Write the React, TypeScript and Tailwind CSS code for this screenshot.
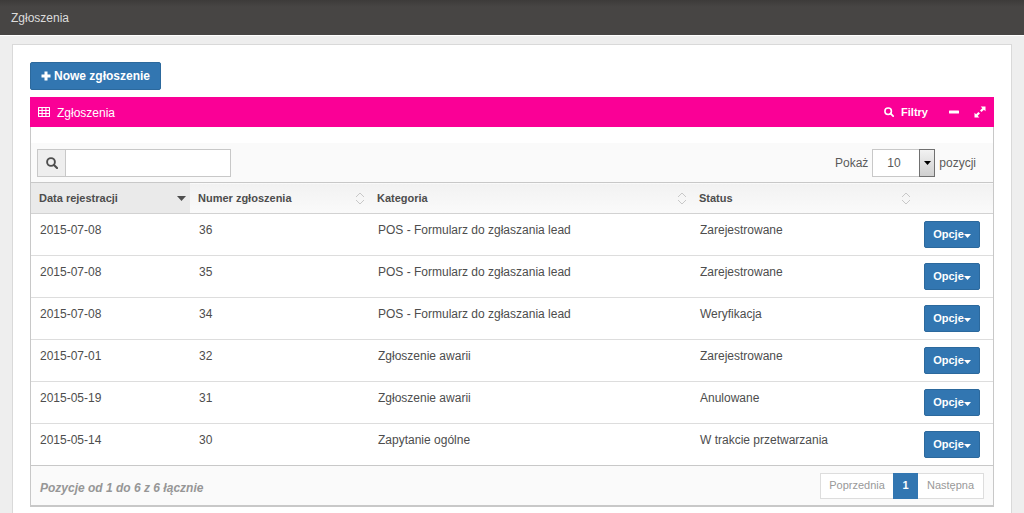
import React from "react";

type Row = { date: string; id: number; category: string; status: string };

const rows: Row[] = [
  { date: "2015-07-08", id: 36, category: "POS - Formularz do zgłaszania lead", status: "Zarejestrowane" },
  { date: "2015-07-08", id: 35, category: "POS - Formularz do zgłaszania lead", status: "Zarejestrowane" },
  { date: "2015-07-08", id: 34, category: "POS - Formularz do zgłaszania lead", status: "Weryfikacja" },
  { date: "2015-07-01", id: 32, category: "Zgłoszenie awarii", status: "Zarejestrowane" },
  { date: "2015-05-19", id: 31, category: "Zgłoszenie awarii", status: "Anulowane" },
  { date: "2015-05-14", id: 30, category: "Zapytanie ogólne", status: "W trakcie przetwarzania" },
];

function TableIcon() {
  return (
    <svg width="12" height="10" viewBox="0 0 12 10" fill="none" stroke="currentColor" aria-hidden="true">
      <rect x="0.5" y="0.5" width="11" height="9" rx="0.5" strokeWidth="1.2" />
      <path d="M0 3.5h12M0 6.5h12M4.1 0v10M7.9 0v10" strokeWidth="1.1" />
    </svg>
  );
}

function SearchIcon({ className }: { className: string }) {
  return (
    <svg className={className} viewBox="0 0 12 12" fill="none" stroke="currentColor" strokeLinecap="round" aria-hidden="true">
      <circle cx="5" cy="5" r="3.9" strokeWidth="1.9" />
      <path d="M8 8l3 3" strokeWidth="2.1" />
    </svg>
  );
}

function PlusIcon() {
  return (
    <svg width="10" height="10" viewBox="0 0 10 10" fill="currentColor" aria-hidden="true">
      <path d="M3.5 0.5h3v3h3v3h-3v3h-3v-3h-3v-3h3z" />
    </svg>
  );
}

function MinusIcon() {
  return (
    <svg width="10" height="10" viewBox="0 0 10 10" fill="currentColor" aria-hidden="true">
      <rect y="3.5" width="10" height="3" rx="0.5" />
    </svg>
  );
}

function ExpandIcon() {
  return (
    <svg width="12" height="12" viewBox="0 0 12 12" fill="currentColor" aria-hidden="true">
      <path d="M6.7 0.5h4.8v4.8L9.9 3.7 7.5 6.1 6 4.6 8.3 2.2zM5.3 11.5H0.5V6.7l1.6 1.6 2.3-2.4L6 7.4 3.7 9.8z" />
    </svg>
  );
}

function Caret({ className }: { className: string }) {
  return (
    <svg className={className} viewBox="0 0 8 4" preserveAspectRatio="none" fill="currentColor" aria-hidden="true">
      <path d="M0 0h8L4 4z" />
    </svg>
  );
}

function SortIcon() {
  return (
    <svg width="10" height="13" viewBox="0 0 10 13" fill="none" stroke="#c8c8c8" aria-hidden="true">
      <path d="M1 5l4-4 4 4M1 8l4 4 4-4" />
    </svg>
  );
}

function HeaderCell({ label, sorted }: { label: string; sorted?: boolean }) {
  return (
    <th
      scope="col"
      aria-sort={sorted ? "descending" : undefined}
      className={sorted ? "h-[31px] bg-[#eaeaea] p-0" : "h-[31px] p-0"}
    >
      <button type="button" className="flex w-full items-center justify-between pr-1 pl-2 text-left text-[11px] font-bold">
        <span>{label}</span>
        {sorted ? <Caret className="h-[5px] w-[9px]" /> : <SortIcon />}
      </button>
    </th>
  );
}

export default function App() {
  return (
    <div className="min-h-screen bg-[#eeeeee] font-['Liberation_Sans',Arial,sans-serif] text-xs text-[#4d4d4d]">
      <header className="flex h-9 items-center border-b border-white bg-linear-to-b from-[#3d3b3a] to-[#474544] to-20% px-[11px] text-[#dcdcdc]">
        <h1>Zgłoszenia</h1>
      </header>

      <main className="mx-3 mt-2 border border-[#d9d9d9] bg-white px-[17px] pt-[17px] pb-5">
        <button type="button" className="flex h-7 items-center gap-[3px] rounded-xs border border-[#2c699d] bg-[#3276b1] px-2.5 font-bold text-white">
          <PlusIcon />
          Nowe zgłoszenie
        </button>

        <section className="mt-[7px]">
          <header className="flex h-[30px] items-center bg-[#fa0096] px-2 text-white">
            <TableIcon />
            <h2 className="ml-[7px] flex-1 pt-0.5 text-xs">Zgłoszenia</h2>
            <button type="button" className="flex items-center gap-[7px] text-[11px] font-bold">
              <SearchIcon className="size-2.5" />
              Filtry
            </button>
            <button type="button" aria-label="Zwiń" className="ml-[21px]">
              <MinusIcon />
            </button>
            <button type="button" aria-label="Pełny ekran" className="ml-[15px]">
              <ExpandIcon />
            </button>
          </header>

          <div className="border-x border-b-2 border-[#c8c8c8] pt-4">
            <div className="flex h-[39px] items-center justify-between bg-[#fafafa] pr-[17px] pl-1.5">
              <label className="flex h-7 border border-[#c8c8c8] bg-white">
                <span className="flex w-7 items-center justify-center border-r border-[#c8c8c8] bg-[#eeeeee]">
                  <SearchIcon className="size-3" />
                </span>
                <input type="search" aria-label="Szukaj" className="w-[164px] px-2 outline-none" />
              </label>
              <label className="flex items-center gap-1 text-[#5a5a5a]">
                Pokaż
                <span className="relative flex">
                  <select defaultValue="10" className="h-7 w-[63px] appearance-none border border-[#c8c8c8] bg-white pl-3.5">
                    <option>10</option>
                    <option>25</option>
                    <option>50</option>
                  </select>
                  <span className="pointer-events-none absolute inset-y-0 right-0 flex w-4 items-center justify-center border border-[#707070] bg-linear-to-b from-[#f2f2f2] to-[#cfcfcf] text-black">
                    <Caret className="h-1 w-[7px]" />
                  </span>
                </span>
                pozycji
              </label>
            </div>

            <table className="w-full table-fixed border-collapse">
              <colgroup>
                <col className="w-[159px]" />
                <col className="w-[179px]" />
                <col />
                <col className="w-[224px]" />
                <col className="w-[78px]" />
              </colgroup>
              <thead className="border-t border-b border-t-[#c8c8c8] border-b-[#d2d2d2] bg-linear-to-b from-[#f2f2f2] to-[#fafafa]">
                <tr>
                  <HeaderCell label="Data rejestracji" sorted />
                  <HeaderCell label="Numer zgłoszenia" />
                  <HeaderCell label="Kategoria" />
                  <HeaderCell label="Status" />
                  <td />
                </tr>
              </thead>
              <tbody>
                {rows.map((row) => (
                  <tr key={row.id} className="h-[42px] border-b border-[#dddddd] align-top last:border-[#c8c8c8]">
                    <td className="px-[9px] pt-2">{row.date}</td>
                    <td className="px-[9px] pt-2">{row.id}</td>
                    <td className="px-[9px] pt-2">{row.category}</td>
                    <td className="px-[9px] pt-2">{row.status}</td>
                    <td className="pt-[7px] pl-[9px]">
                      <button type="button" className="flex h-[27px] w-[56px] items-center justify-center rounded-xs border border-[#2c699d] bg-[#3276b1] text-[11px] font-bold text-white">
                        Opcje
                        <Caret className="mt-0.5 h-1 w-[7px]" />
                      </button>
                    </td>
                  </tr>
                ))}
              </tbody>
            </table>

            <footer className="flex h-[39px] items-center justify-between bg-[#fafafa] px-[9px]">
              <p className="pt-1 font-bold text-[#969696] italic">Pozycje od 1 do 6 z 6 łącznie</p>
              <nav aria-label="Strony" className="flex h-[26px] border border-[#dddddd] bg-white text-[11px] text-[#999999]">
                <button type="button" className="w-[72px]">Poprzednia</button>
                <button type="button" aria-current="page" className="-my-px w-[25px] bg-[#3276b1] font-bold text-white">1</button>
                <button type="button" className="w-[65px]">Następna</button>
              </nav>
            </footer>
          </div>
        </section>
      </main>
    </div>
  );
}
